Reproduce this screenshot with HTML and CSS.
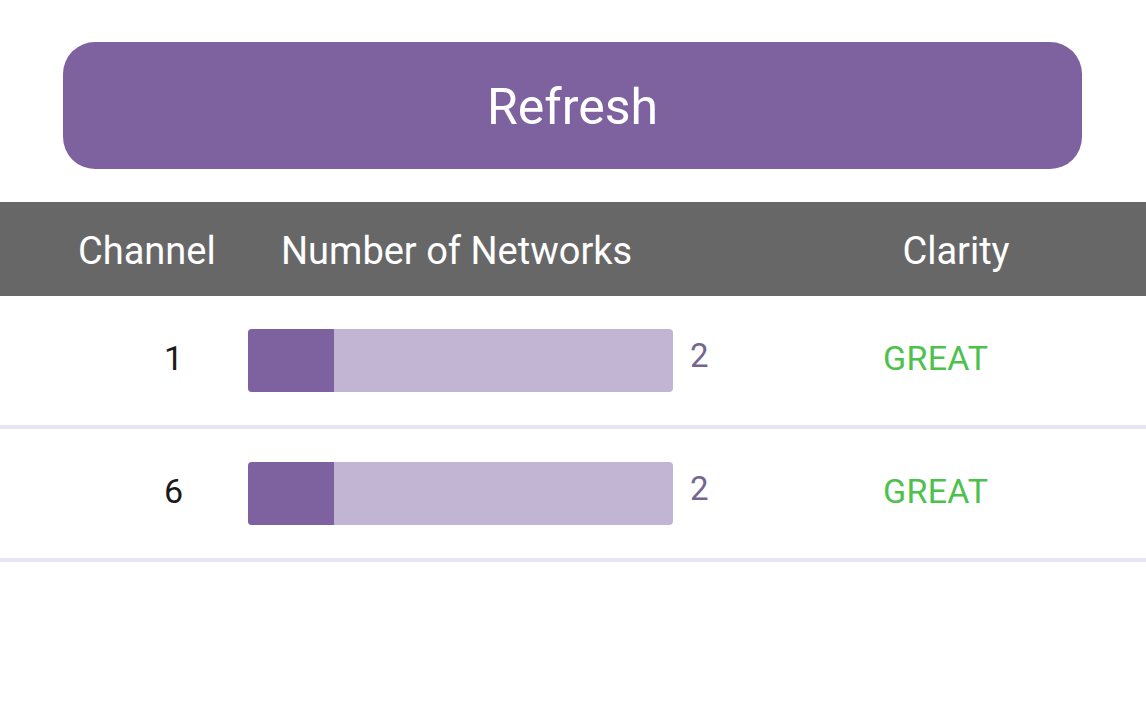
FILE: index.html
```html
<!DOCTYPE html>
<html>
<head>
<meta charset="utf-8">
<link rel="stylesheet" href="styles.css">
</head>
<body>
<div class="page">
  <div class="btn-wrap">
    <button class="refresh">Refresh</button>
  </div>
  <div class="table">
    <div class="head">
      <div class="h-channel">Channel</div>
      <div class="h-networks">Number of Networks</div>
      <div class="h-clarity">Clarity</div>
    </div>
    <div class="row">
      <div class="c-channel">1</div>
      <div class="c-bar">
        <div class="bar"><div class="fill" style="width:20.2%"></div></div>
        <div class="count">2</div>
      </div>
      <div class="c-clarity">GREAT</div>
    </div>
    <div class="row">
      <div class="c-channel">6</div>
      <div class="c-bar">
        <div class="bar"><div class="fill" style="width:20.2%"></div></div>
        <div class="count">2</div>
      </div>
      <div class="c-clarity">GREAT</div>
    </div>
  </div>
</div>
</body>
</html>
```

FILE: styles.css
```css
html, body {
  margin: 0;
  padding: 0;
  background: #ffffff;
  font-family: Roboto, "Noto Sans", sans-serif;
}
.page {
  width: 1146px;
  height: 716px;
  overflow: hidden;
}
.btn-wrap {
  padding: 42px 64px 0 63px;
  height: 127px;
}
.refresh {
  display: flex;
  align-items: center;
  justify-content: center;
  width: 100%;
  height: 127px;
  border: none;
  border-radius: 32px;
  background: #7e62a0;
  color: #ffffff;
  font-family: Roboto, "Noto Sans", sans-serif;
  font-size: 50px;
  padding: 2px 0 0 0;
}
.table {
  margin-top: 33px;
}
.head {
  display: flex;
  align-items: center;
  height: 94px;
  background: #676767;
  color: #ffffff;
  font-size: 38px;
}
.h-channel {
  width: 281px;
  box-sizing: border-box;
  padding-left: 78px;
  padding-top: 4px;
}
.h-networks {
  width: 560px;
  padding-top: 4px;
}
.h-clarity {
  width: 230px;
  text-align: center;
  padding-top: 4px;
}
.row {
  display: flex;
  align-items: center;
  height: 129px;
  border-bottom: 4px solid #e7e4f5;
}
.c-channel {
  width: 248px;
  box-sizing: border-box;
  padding-left: 164px;
  font-size: 34px;
  color: #1a1a1a;
  margin-top: -6px;
}
.c-bar {
  width: 635px;
  display: flex;
  align-items: center;
}
.bar {
  width: 425px;
  height: 63px;
  background: #c1b5d3;
  border-radius: 4px;
  overflow: hidden;
}
.fill {
  height: 100%;
  background: #7e62a0;
}
.count {
  margin-left: 17px;
  font-size: 33px;
  color: #72678f;
  margin-top: -11px;
}
.c-clarity {
  font-size: 34px;
  letter-spacing: 0.3px;
  color: #4cc24c;
  margin-top: -6px;
}
```
